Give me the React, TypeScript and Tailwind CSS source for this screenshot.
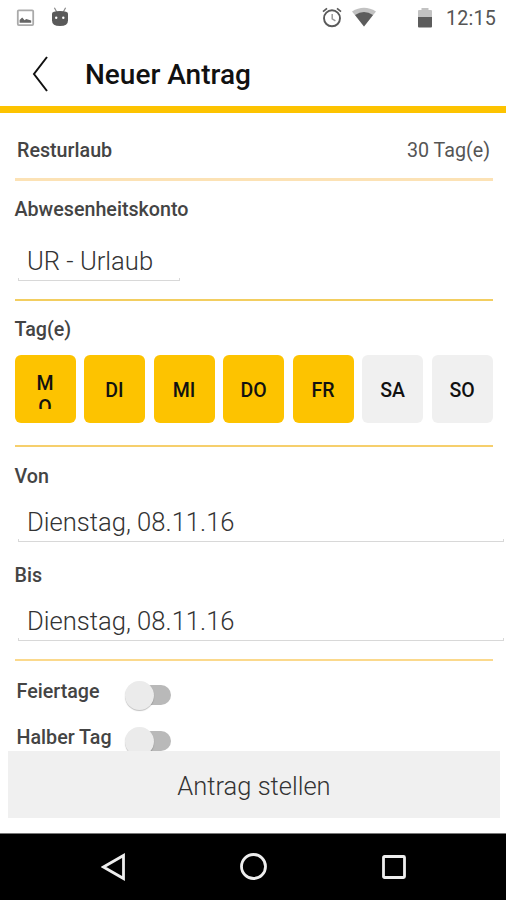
import type { ReactNode } from "react";

const days = [
  { label: "MO", active: true },
  { label: "DI", active: true },
  { label: "MI", active: true },
  { label: "DO", active: true },
  { label: "FR", active: true },
  { label: "SA", active: false },
  { label: "SO", active: false },
];

function StatusBar() {
  return (
    <div className="flex h-9 shrink-0 items-center justify-between pl-4 pr-[10px]">
      <div className="flex items-center gap-4">
        <svg width="19" height="18" viewBox="0 0 19 18">
          <rect x="1.800" y="1.300" width="15.400" height="14.800" rx="1" fill="#fff" stroke="#aaa" strokeWidth="1.800" />
          <path d="M3.600 13.800V11l2.600-2.400 2.400 2.600 1.600-1.100 5 1.400v2.300z" fill="#666" />
        </svg>
        <svg className="-mt-[3px]" width="18" height="20" viewBox="0 0 18 20">
          <path d="M3.400 0.800l2.200 4M14.600 0.800l-2.200 4" stroke="#888" strokeWidth="1.200" />
          <path d="M1 6.500Q1 4 9 4t8 2.500v7Q17 19 9 19T1 13.500z" fill="#5a5a5a" />
          <circle cx="5.200" cy="10.800" r="1.200" fill="#fff" />
          <circle cx="12.300" cy="10.800" r="1.200" fill="#fff" />
        </svg>
      </div>
      <div className="flex items-center">
        <svg className="-mt-[2px]" width="20" height="21" viewBox="0 0 20 21" fill="none" stroke="#5a5a5a">
          <circle cx="10" cy="11.300" r="8" strokeWidth="1.900" />
          <path d="M1 4.600L5 1.300M15 1.300l4 3.300" strokeWidth="1.700" />
          <path d="M10.200 7v4.800l3.200 2" stroke="#999" strokeWidth="1.500" />
        </svg>
        <svg className="-mt-[2px] ml-[10px]" width="24" height="20" viewBox="0 0 24 20">
          <path d="M0 4.500Q12-3 24 4.500L12 19.500z" fill="#c2c2c2" />
          <path d="M3 8Q12 2 21 8L12 19.500z" fill="#5c5c5c" />
        </svg>
        <svg className="-mt-[1px] ml-[42px]" width="14" height="20" viewBox="0 0 14 20">
          <path d="M0 3q0-1 1-1h2.500V0h7v2H13q1 0 1 1v6H0z" fill="#c2c2c2" />
          <path d="M0 9h14v9.500q0 1-1 1H1q-1 0-1-1z" fill="#5c5c5c" />
        </svg>
        <span className="ml-[14px] mt-[2px] text-[19.700px] leading-5 tracking-[0.2px] text-[#555]">12:15</span>
      </div>
    </div>
  );
}

function Label({ children }: { children: ReactNode }) {
  return <div className="h-6 text-[19.700px] font-medium leading-[26px] text-[#444]">{children}</div>;
}

function Field({ value, className }: { value: string; className: string }) {
  return (
    <div className={className}>
      <div className="h-7 pl-[9px] text-[25.600px] font-light leading-7 text-[#333]">{value}</div>
      <div className="mt-[3px] h-[3px] border-x border-b border-[#d8d8d8]" />
    </div>
  );
}

function Toggle() {
  return (
    <div className="mt-px flex h-[30px] items-center">
      <div className="z-10 size-[29px] rounded-full bg-[#ebebeb] shadow-[0_1px_1px_rgba(0,0,0,0.25)]" />
      <div className="-ml-[19px] -mt-px h-[20px] w-[36px] rounded-full bg-[#b9b9b9]" />
    </div>
  );
}

export default function App() {
  return (
    <div className="flex h-[900px] w-[506px] flex-col overflow-hidden bg-white font-['Roboto',sans-serif]">
      <StatusBar />

      <header className="flex h-[77px] shrink-0 items-center border-b-[7px] border-[#fdc300] pl-8">
        <svg className="mt-[5px]" width="17" height="36" viewBox="0 0 17 36" fill="none" stroke="#111" strokeWidth="2">
          <path d="M15 1L2 18l13 17" />
        </svg>
        <h1 className="ml-9 mt-[8px] text-[28px] font-medium leading-10 text-[#111]">Neuer Antrag</h1>
      </header>

      <main className="flex h-[638px] shrink-0 flex-col overflow-hidden pl-[14.500px] pr-[13.500px]">
        <div className="mt-[25px] flex items-center justify-between pl-[2.500px] pr-[2.500px]">
          <Label>Resturlaub</Label>
          <span className="h-6 text-[19.700px] leading-[26px] text-[#555]">30 Tag(e)</span>
        </div>
        <div className="mt-4 h-[3px] shrink-0 bg-[#fce2b5]" />

        <div className="mt-4">
          <Label>Abwesenheitskonto</Label>
          <Field value="UR - Urlaub" className="ml-[3.500px] mt-[26px] w-[162px]" />
        </div>
        <div className="mt-[18px] h-[2px] shrink-0 bg-[#f3ce60]" />

        <div className="mt-4">
          <Label>Tag(e)</Label>
          <div className="mt-[14px] flex justify-between">
            {days.map((day) => (
              <div
                key={day.label}
                className={`flex h-[68px] w-[61px] items-center justify-center rounded-[6px] pt-[3px] text-[19.500px] font-medium text-[#111] ${
                  day.active ? "bg-[#fdc300]" : "bg-[#f0f0f0]"
                }`}
              >
                {day.label === "MO" ? (
                  <span className="h-[37px] w-[18px] overflow-hidden break-all text-center leading-[24px]">{day.label}</span>
                ) : (
                  <span>{day.label}</span>
                )}
              </div>
            ))}
          </div>
        </div>
        <div className="mt-[22px] h-[2px] shrink-0 bg-[#f6cf6c]" />

        <div className="mt-[17px]">
          <Label>Von</Label>
          <Field value="Dienstag, 08.11.16" className="-mr-[11px] ml-[3.500px] mt-[20px]" />
        </div>
        <div className="mt-[21px]">
          <Label>Bis</Label>
          <Field value="Dienstag, 08.11.16" className="-mr-[11px] ml-[3.500px] mt-[20px]" />
        </div>
        <div className="mt-[18px] h-[2px] shrink-0 bg-[#fbd98c]" />

        <div className="mt-[18px] flex h-[31px] shrink-0 pl-[2px]">
          <div className="w-[108px]">
            <Label>Feiertage</Label>
          </div>
          <Toggle />
        </div>
        <div className="mt-[15px] flex h-[31px] shrink-0 pl-[2px]">
          <div className="w-[108px]">
            <Label>Halber Tag</Label>
          </div>
          <Toggle />
        </div>
      </main>

      <button className="ml-2 mr-[6px] h-[67px] shrink-0 bg-[#f0f0f0] pt-[4px] text-[25.500px] font-light text-[#333]">
        Antrag stellen
      </button>

      <nav className="mt-[15px] flex h-[67px] items-center border-t border-[#777] bg-black pl-[101px]">
        <svg width="25" height="28" viewBox="0 0 25 28" fill="none" stroke="#eee" strokeWidth="2.800">
          <path d="M22.500 2.500v23L2.500 14z" />
        </svg>
        <svg className="ml-[113px]" width="28" height="28" viewBox="0 0 28 28" fill="none" stroke="#eee" strokeWidth="2.800">
          <circle cx="14.500" cy="13.500" r="12" />
        </svg>
        <svg className="ml-[114px]" width="26" height="26" viewBox="0 0 26 26" fill="none" stroke="#eee" strokeWidth="2.800">
          <rect x="2.500" y="2.500" width="21" height="21" rx="1" />
        </svg>
      </nav>
    </div>
  );
}
